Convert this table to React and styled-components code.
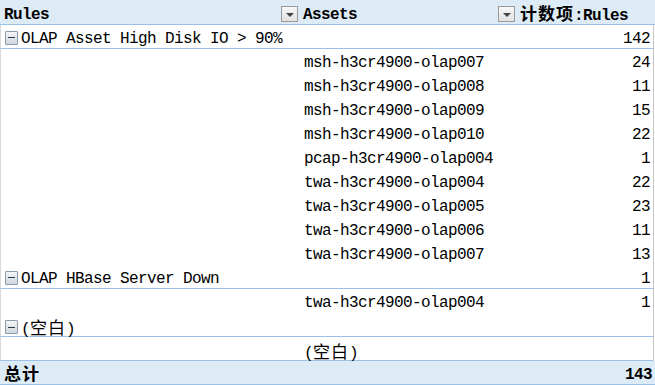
import React from 'react';
import styled, { createGlobalStyle } from 'styled-components';

const GlobalStyle = createGlobalStyle`
  html, body {
    margin: 0;
    padding: 0;
    background: #ffffff;
  }
  body {
    font-family: "Liberation Mono", "Noto Sans CJK SC", monospace;
    font-size: 16px;
    letter-spacing: -0.6px;
    color: #000000;
  }
`;

const Sheet = styled.div`
  width: 655px;
  height: 385px;
  overflow: hidden;
  display: flex;
  flex-direction: column;
`;

const Row = styled.div`
  display: grid;
  grid-template-columns: 300px 217px 1fr;
  height: 24px;
  line-height: 20px;
  padding-top: ${({ $shade }) => ($shade ? 2 : 4)}px;
  box-sizing: border-box;
  align-items: center;
  white-space: nowrap;
  background: ${({ $shade }) => ($shade ? '#ddebf7' : '#ffffff')};
  border-bottom: ${({ $line }) => ($line ? '1px solid #9bc2e6' : 'none')};
  border-left: ${({ $shade }) => ($shade ? 'none' : '1px solid #d9d9d9')};
  border-right: ${({ $shade }) => ($shade ? 'none' : '1px solid #c6c6c6')};
  width: ${({ $shade }) => ($shade ? '655px' : '654px')};
`;

const HeaderRow = styled(Row)`
  height: 25px;
  padding-top: 3px;
  font-weight: bold;
`;

const HeadCell = styled.div`
  display: flex;
  align-items: center;
  padding-left: ${({ $pad }) => $pad || 4}px;
  padding-right: 2px;
  box-sizing: border-box;
  justify-content: space-between;
`;

const DropButton = styled.span`
  width: 15px;
  height: 14px;
  margin-top: -1px;
  border: 1px solid #9a9a9a;
  background: linear-gradient(#f7f7f7, #e2e2e2);
  display: flex;
  align-items: center;
  justify-content: center;

  &::after {
    content: '';
    border-left: 4px solid transparent;
    border-right: 4px solid transparent;
    border-top: 4px solid #444;
    margin-top: 1px;
  }
`;

const GroupCell = styled.div`
  grid-column: 1 / 3;
  display: flex;
  align-items: center;
  gap: 3px;
  padding-left: 4px;
`;

const Toggle = styled.span`
  width: 11px;
  height: 12px;
  margin-top: -3px;
  border: 1px solid #8d9aa8;
  border-radius: 1px;
  background: linear-gradient(#f4f6f8, #cfd6de);
  display: flex;
  align-items: center;
  justify-content: center;

  &::after {
    content: '';
    width: 7px;
    height: 1px;
    background: #2b3a4a;
  }
`;

const Cell = styled.div`
  padding-left: ${({ $pad }) => $pad || 3}px;
  font-weight: ${({ $bold }) => ($bold ? 'bold' : 'normal')};
`;

const Num = styled.div`
  grid-column: 3;
  text-align: right;
  padding-right: 3px;
  font-weight: ${({ $bold }) => ($bold ? 'bold' : 'normal')};
`;

const Cjk = styled.span`
  font-family: "Noto Sans CJK SC", sans-serif;
  font-size: 17px;
  letter-spacing: 1px;
  line-height: 20px;
`;

const groups = [
  {
    label: 'OLAP Asset High Disk IO > 90%',
    total: 142,
    items: [
      ['msh-h3cr4900-olap007', 24],
      ['msh-h3cr4900-olap008', 11],
      ['msh-h3cr4900-olap009', 15],
      ['msh-h3cr4900-olap010', 22],
      ['pcap-h3cr4900-olap004', 1],
      ['twa-h3cr4900-olap004', 22],
      ['twa-h3cr4900-olap005', 23],
      ['twa-h3cr4900-olap006', 11],
      ['twa-h3cr4900-olap007', 13],
    ],
  },
  {
    label: 'OLAP HBase Server Down',
    total: 1,
    items: [['twa-h3cr4900-olap004', 1]],
  },
  {
    label: null,
    total: null,
    items: [[null, null]],
  },
];

const Blank = () => (
  <span>
    (<Cjk>空白</Cjk>)
  </span>
);

const App = () => (
  <>
    <GlobalStyle />
    <Sheet>
      <HeaderRow $shade $line>
        <HeadCell>
          <span>Rules</span>
          <DropButton />
        </HeadCell>
        <HeadCell $pad={3}>
          <span>Assets</span>
          <DropButton />
        </HeadCell>
        <HeadCell $pad={3}>
          <span>
            <Cjk>计数项</Cjk>:Rules
          </span>
        </HeadCell>
      </HeaderRow>

      {groups.map((g, i) => (
        <React.Fragment key={i}>
          <Row $line>
            <GroupCell>
              <Toggle />
              {g.label ? <span>{g.label}</span> : <Blank />}
            </GroupCell>
            <Num>{g.total}</Num>
          </Row>
          {g.items.map(([name, n], j) => (
            <Row key={j} $line={i === groups.length - 1}>
              <span />
              <Cell>{name ? name : <Blank />}</Cell>
              <Num>{n}</Num>
            </Row>
          ))}
        </React.Fragment>
      ))}

      <Row $shade $line>
        <Cell $pad={4} $bold>
          <Cjk>总计</Cjk>
        </Cell>
        <span />
        <Num $bold>143</Num>
      </Row>
    </Sheet>
  </>
);

export default App;
